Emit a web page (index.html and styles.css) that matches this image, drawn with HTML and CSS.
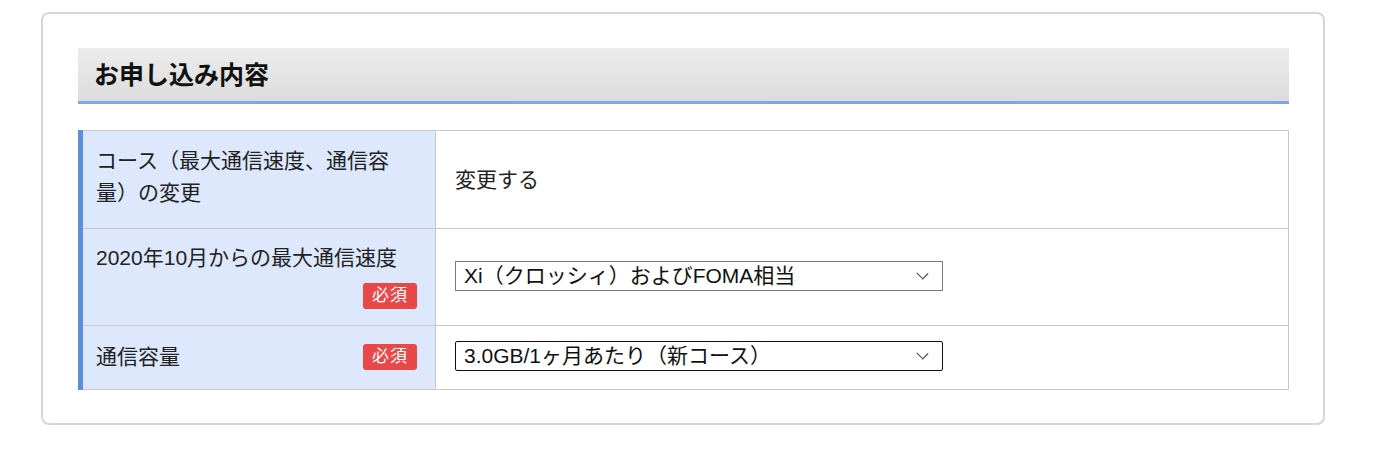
FILE: index.html
```html
<!DOCTYPE html>
<html lang="ja">
<head>
    <meta charset="UTF-8">
    <meta name="viewport" content="width=device-width, initial-scale=1.0">
    <title>お申し込み内容</title>
    <link rel="stylesheet" href="styles.css">
</head>
<body>
    <div class="card">
        <div class="section-title">
            <h2>お申し込み内容</h2>
        </div>
        <table class="form-table">
            <tr class="row-course">
                <th>
                    <div class="label">
                        <span>コース（最大通信速度、通信容量）の変更</span>
                    </div>
                </th>
                <td>変更する</td>
            </tr>
            <tr class="row-speed">
                <th>
                    <div class="label">
                        <span>2020年10月からの最大通信速度</span>
                        <span class="required">必須</span>
                    </div>
                </th>
                <td>
                    <div class="select-wrap">
                        <select id="speed">
                            <option>Xi（クロッシィ）およびFOMA相当</option>
                        </select>
                    </div>
                </td>
            </tr>
            <tr class="row-capacity">
                <th>
                    <div class="label">
                        <span>通信容量</span>
                        <span class="required">必須</span>
                    </div>
                </th>
                <td>
                    <div class="select-wrap">
                        <select id="capacity" class="active">
                            <option>3.0GB/1ヶ月あたり（新コース）</option>
                        </select>
                    </div>
                </td>
            </tr>
        </table>
    </div>
</body>
</html>
```

FILE: styles.css
```css
body{
    margin: 0;
    background-color: #fff;
    color: #222;
    font-family: "Liberation Sans", "Noto Sans CJK JP", sans-serif;
}
.card{
    margin: 12px 49px 0 41px;
    padding: 34px 34px 33px 35px;
    border: 2px solid #d6d6d6;
    border-radius: 8px;
    background-color: #fff;
}
.section-title{
    height: 53px;
    padding: 0 16px;
    display: flex;
    align-items: center;
    background: linear-gradient(#ececec, #dcdcdc);
    border-bottom: 3px solid #7ea6e8;
}
.section-title h2{
    margin: 0;
    font-size: 25px;
    font-weight: bold;
    color: #111;
    line-height: 30px;
}
.form-table{
    width: 100%;
    margin-top: 26px;
    border-collapse: collapse;
    font-size: 21px;
}
.form-table th, .form-table td{
    border: 1px solid #c8c8c8;
    text-align: left;
    vertical-align: middle;
}
.form-table th{
    width: 321px;
    padding: 14px 18px 15px 13px;
    background-color: #dde8fc;
    border-left: 5px solid #5d8fdb;
    font-weight: normal;
    vertical-align: top;
}
.form-table td{
    padding: 0 19px 3px 19px;
}
.label{
    display: flex;
    flex-wrap: wrap;
    align-items: center;
    justify-content: space-between;
    line-height: 32px;
}
.row-course th{
    padding-top: 14px;
    padding-bottom: 19px;
}
.row-speed th{
    padding-top: 13px;
    padding-bottom: 16px;
}
.row-speed .required{
    margin-top: 9px;
    margin-left: auto;
}
.row-capacity th{
    padding-top: 15px;
    padding-bottom: 16px;
}
.required{
    display: inline-block;
    width: 54px;
    height: 26px;
    line-height: 26px;
    border-radius: 3px;
    background-color: #e94848;
    color: #fff;
    font-size: 17px;
    text-align: center;
    letter-spacing: 1px;
}
.select-wrap{
    position: relative;
    width: 488px;
}
.select-wrap select{
    appearance: none;
    -webkit-appearance: none;
    width: 100%;
    height: 30px;
    margin: 0;
    padding: 0 30px 0 8px;
    border: 1px solid #7a7a7a;
    border-radius: 0;
    background-color: #fff;
    color: #111;
    font-family: "Liberation Sans", "Noto Sans CJK JP", sans-serif;
    font-size: 21px;
    line-height: 28px;
}
.select-wrap select.active{
    border-color: #111;
    border-radius: 2px;
}
/* chevron drawn over the right end of the select */
.select-wrap::after{
    content: "";
    position: absolute;
    right: 16px;
    top: 8px;
    width: 8px;
    height: 8px;
    border-right: 1px solid #333;
    border-bottom: 1px solid #333;
    transform: rotate(45deg) scaleY(0.9);
    pointer-events: none;
}
```
